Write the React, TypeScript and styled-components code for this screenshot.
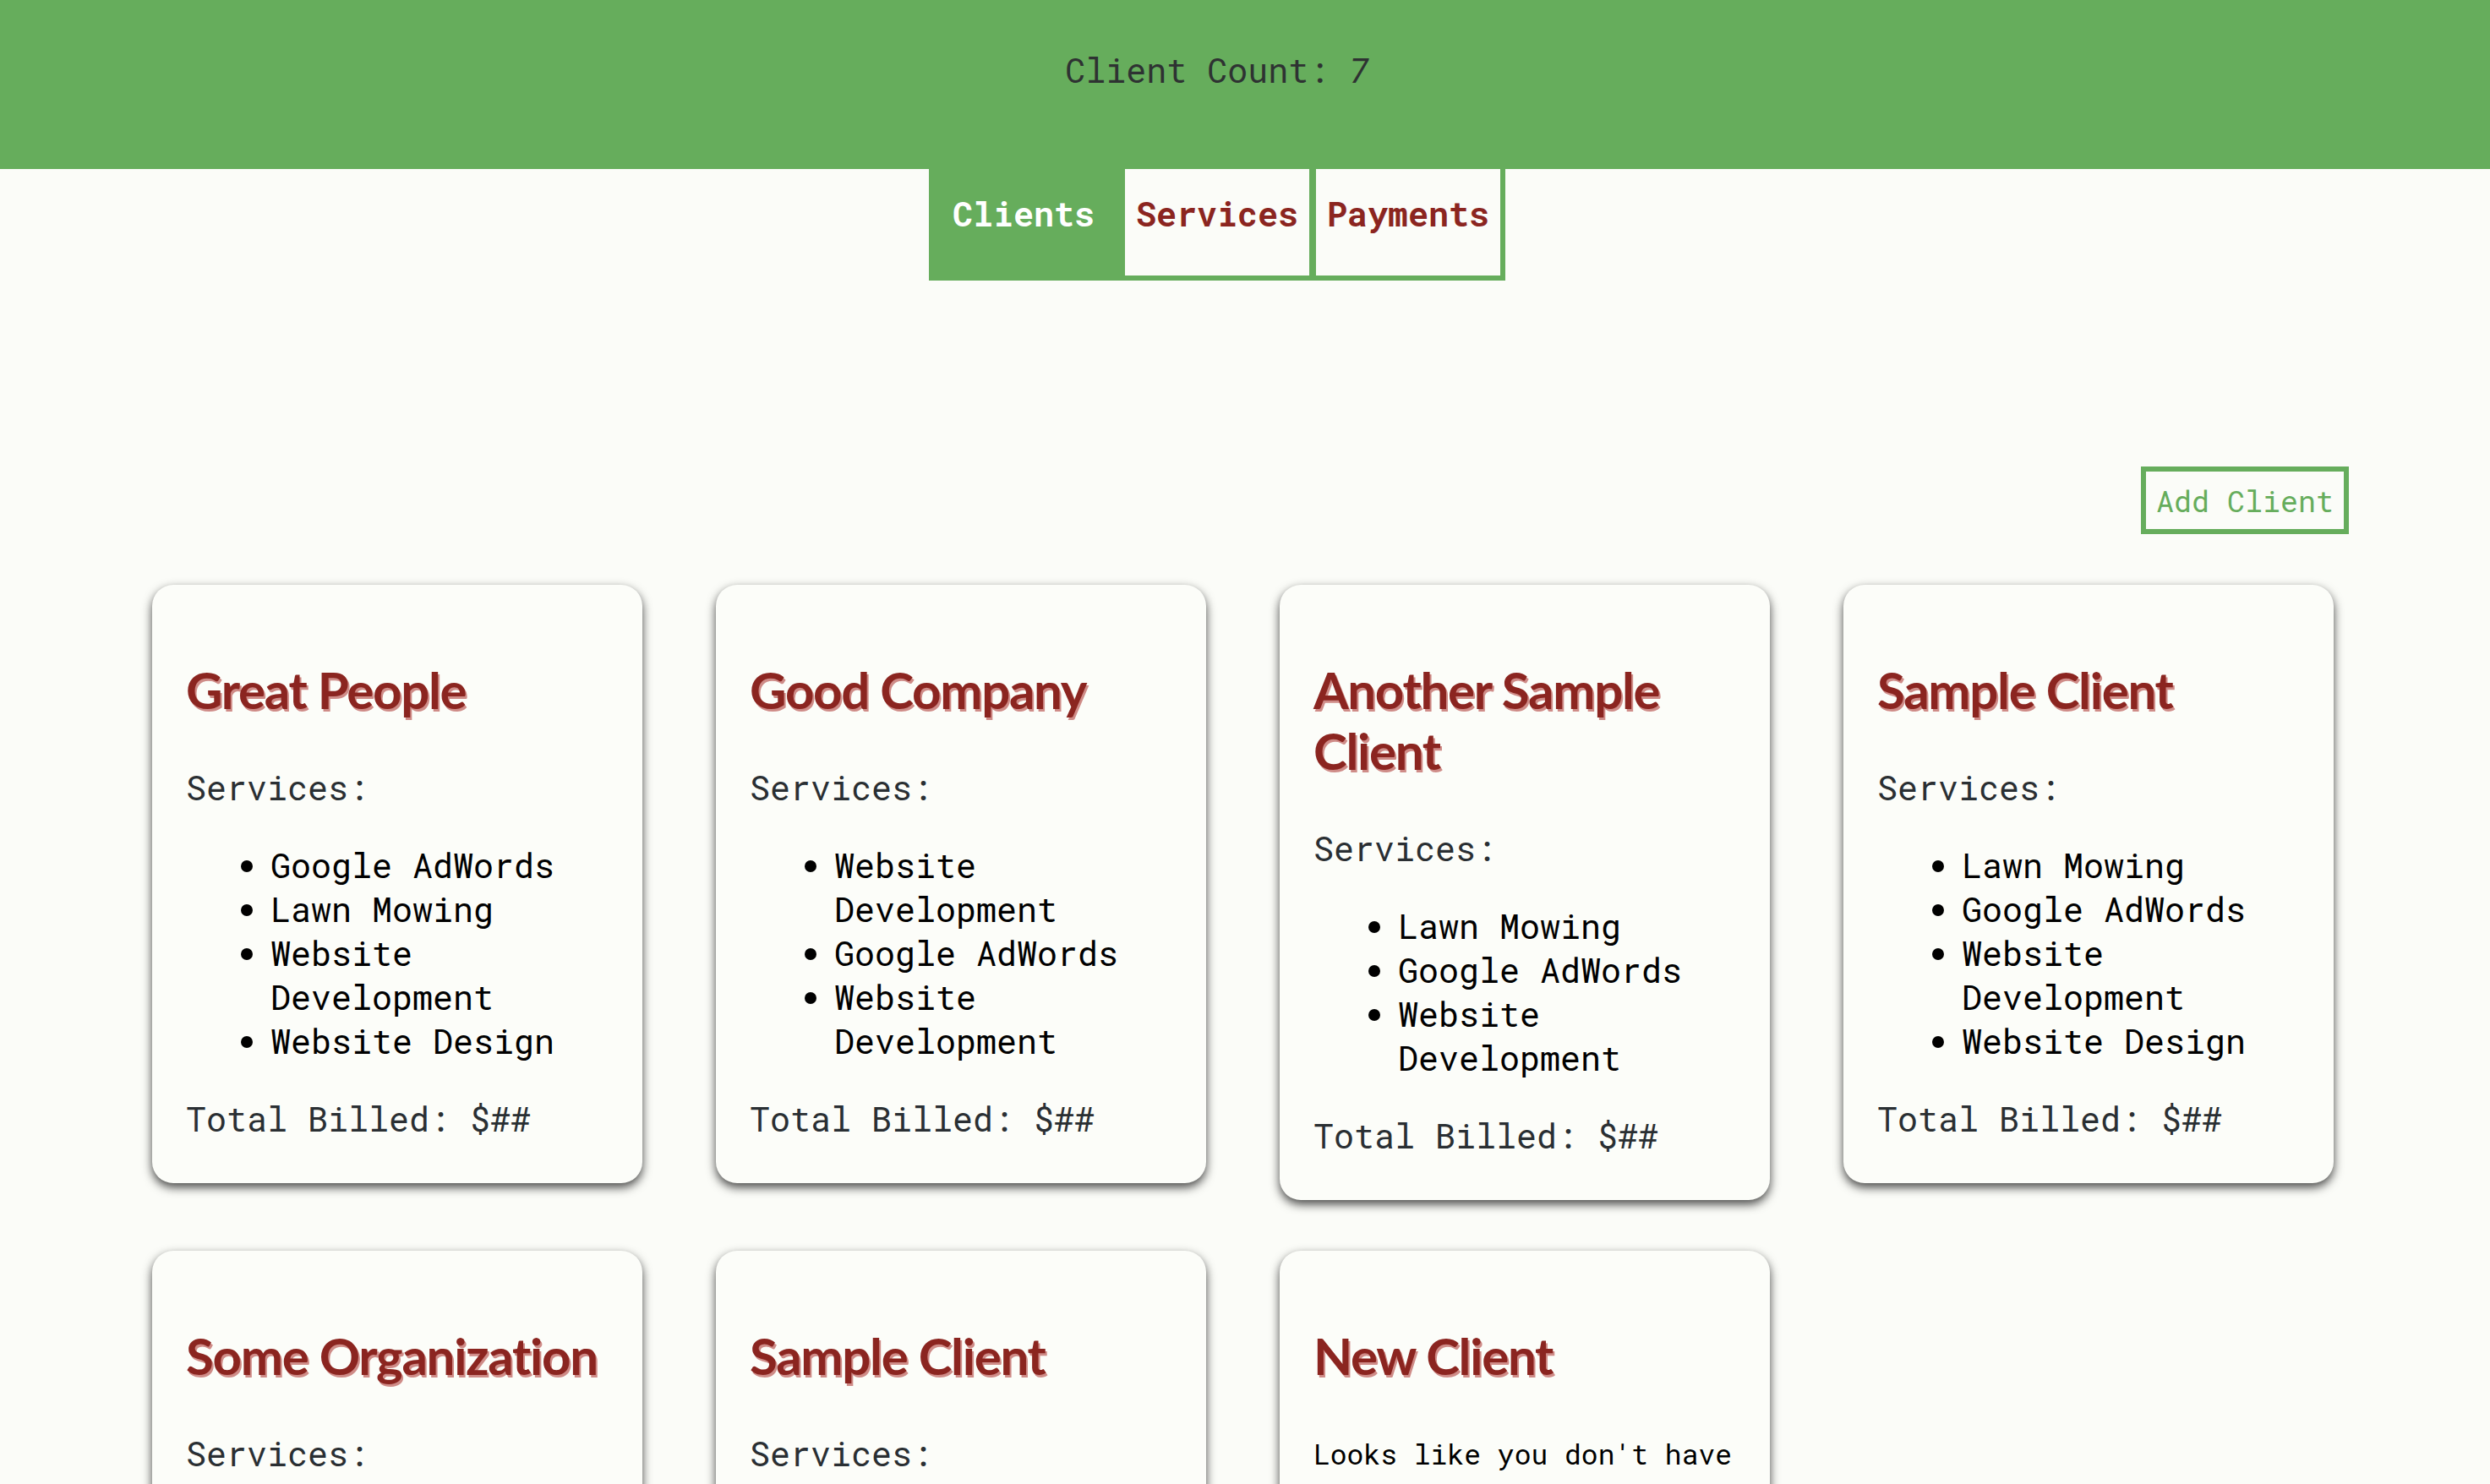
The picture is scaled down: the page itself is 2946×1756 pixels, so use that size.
import React from "react";
import styled, { createGlobalStyle } from "styled-components";

const GREEN = "#66ad5c";
const RED = "#8b2520";
const PAPER = "#fbfcf8";
const MONO = `"Roboto Mono", "DejaVu Sans Mono", "Liberation Mono", monospace`;

const GlobalStyle = createGlobalStyle`
  html, body {
    margin: 0;
    padding: 0;
    background: ${PAPER};
  }
  body {
    font-family: ${MONO};
    font-size: 40px;
    line-height: 52px;
    color: #2a2f33;
  }
  * { box-sizing: border-box; }
`;

const Header = styled.header`
  height: 200px;
  background: ${GREEN};
  padding: 56px 66px 0 0;
  text-align: center;
`;

const Count = styled.span`
  font-size: 40px;
  line-height: 53px;
  color: #2e3232;
  em {
    font-style: italic;
  }
`;

const TabRow = styled.nav`
  display: flex;
  justify-content: center;
  padding-right: 66px;
`;

const TabBar = styled.div`
  display: flex;
  gap: 8px;
  background: ${GREEN};
  padding: 0 6px 6px 0;
`;

const Tab = styled.button<{ $active?: boolean }>`
  height: 126px;
  padding: 0 ${(p) => (p.$active ? "28px" : "13px")} 22px;
  border: none;
  margin: 0;
  font-family: ${MONO};
  font-size: 40px;
  line-height: 53px;
  font-weight: bold;
  text-align: center;
  cursor: pointer;
  background: ${(p) => (p.$active ? GREEN : PAPER)};
  color: ${(p) => (p.$active ? "#ffffff" : RED)};
`;

const Toolbar = styled.div`
  display: flex;
  justify-content: flex-end;
  margin-top: 220px;
  padding-right: 167px;
`;

const AddButton = styled.button`
  border: 6px solid ${GREEN};
  background: transparent;
  color: ${GREEN};
  font-family: ${MONO};
  font-size: 35px;
  line-height: 46px;
  padding: 11px 12px;
  cursor: pointer;
`;

const Grid = styled.main`
  display: grid;
  grid-template-columns: repeat(4, 580px);
  column-gap: 87px;
  row-gap: 60px;
  justify-content: start;
  align-items: start;
  margin-top: 60px;
  padding: 0 0 120px 180px;
`;

const Card = styled.article`
  background: #fcfdf9;
  border-radius: 25px;
  box-shadow: 0 5px 12px rgba(0, 0, 0, 0.72);
  padding: 40px 40px 50px;
`;

const Title = styled.h2`
  margin: 48px 0 54px;
  font-family: Lato, "Open Sans", sans-serif;
  font-weight: bold;
  font-size: 60px;
  line-height: 72px;
  letter-spacing: -1.3px;
  color: ${RED};
  text-shadow: 2px 3px 0 #cf8c88;
`;

const Label = styled.p`
  margin: 0;
  color: #2a2f33;
`;

const Services = styled.ul`
  margin: 40px 0;
  padding-left: 100px;
  color: #000;
`;

const Total = styled.p`
  margin: 0;
  color: #2a2f33;
`;

const Empty = styled.p`
  margin: 0;
  font-size: 33px;
  color: #000;
`;

type Client = { name: string; services: string[] };

const clients: Client[] = [
  { name: "Great People", services: ["Google AdWords", "Lawn Mowing", "Website Development", "Website Design"] },
  { name: "Good Company", services: ["Website Development", "Google AdWords", "Website Development"] },
  { name: "Another Sample Client", services: ["Lawn Mowing", "Google AdWords", "Website Development"] },
  { name: "Sample Client", services: ["Lawn Mowing", "Google AdWords", "Website Development", "Website Design"] },
  { name: "Some Organization", services: ["Website Design", "Lawn Mowing"] },
  { name: "Sample Client", services: ["Google AdWords", "Website Development"] },
  { name: "New Client", services: [] },
];

function ClientCard({ client }: { client: Client }) {
  return (
    <Card>
      <Title>{client.name}</Title>
      {client.services.length > 0 ? (
        <>
          <Label>Services:</Label>
          <Services>
            {client.services.map((s, i) => (
              <li key={i}>{s}</li>
            ))}
          </Services>
          <Total>Total Billed: $##</Total>
        </>
      ) : (
        <Empty>Looks like you don't have any services for this client yet.</Empty>
      )}
    </Card>
  );
}

export default function App() {
  return (
    <>
      <GlobalStyle />
      <Header>
        <Count>
          Client Count: <em>{clients.length}</em>
        </Count>
      </Header>
      <TabRow>
        <TabBar>
          <Tab $active>Clients</Tab>
          <Tab>Services</Tab>
          <Tab>Payments</Tab>
        </TabBar>
      </TabRow>
      <Toolbar>
        <AddButton>Add Client</AddButton>
      </Toolbar>
      <Grid>
        {clients.map((c, i) => (
          <ClientCard key={i} client={c} />
        ))}
      </Grid>
    </>
  );
}
